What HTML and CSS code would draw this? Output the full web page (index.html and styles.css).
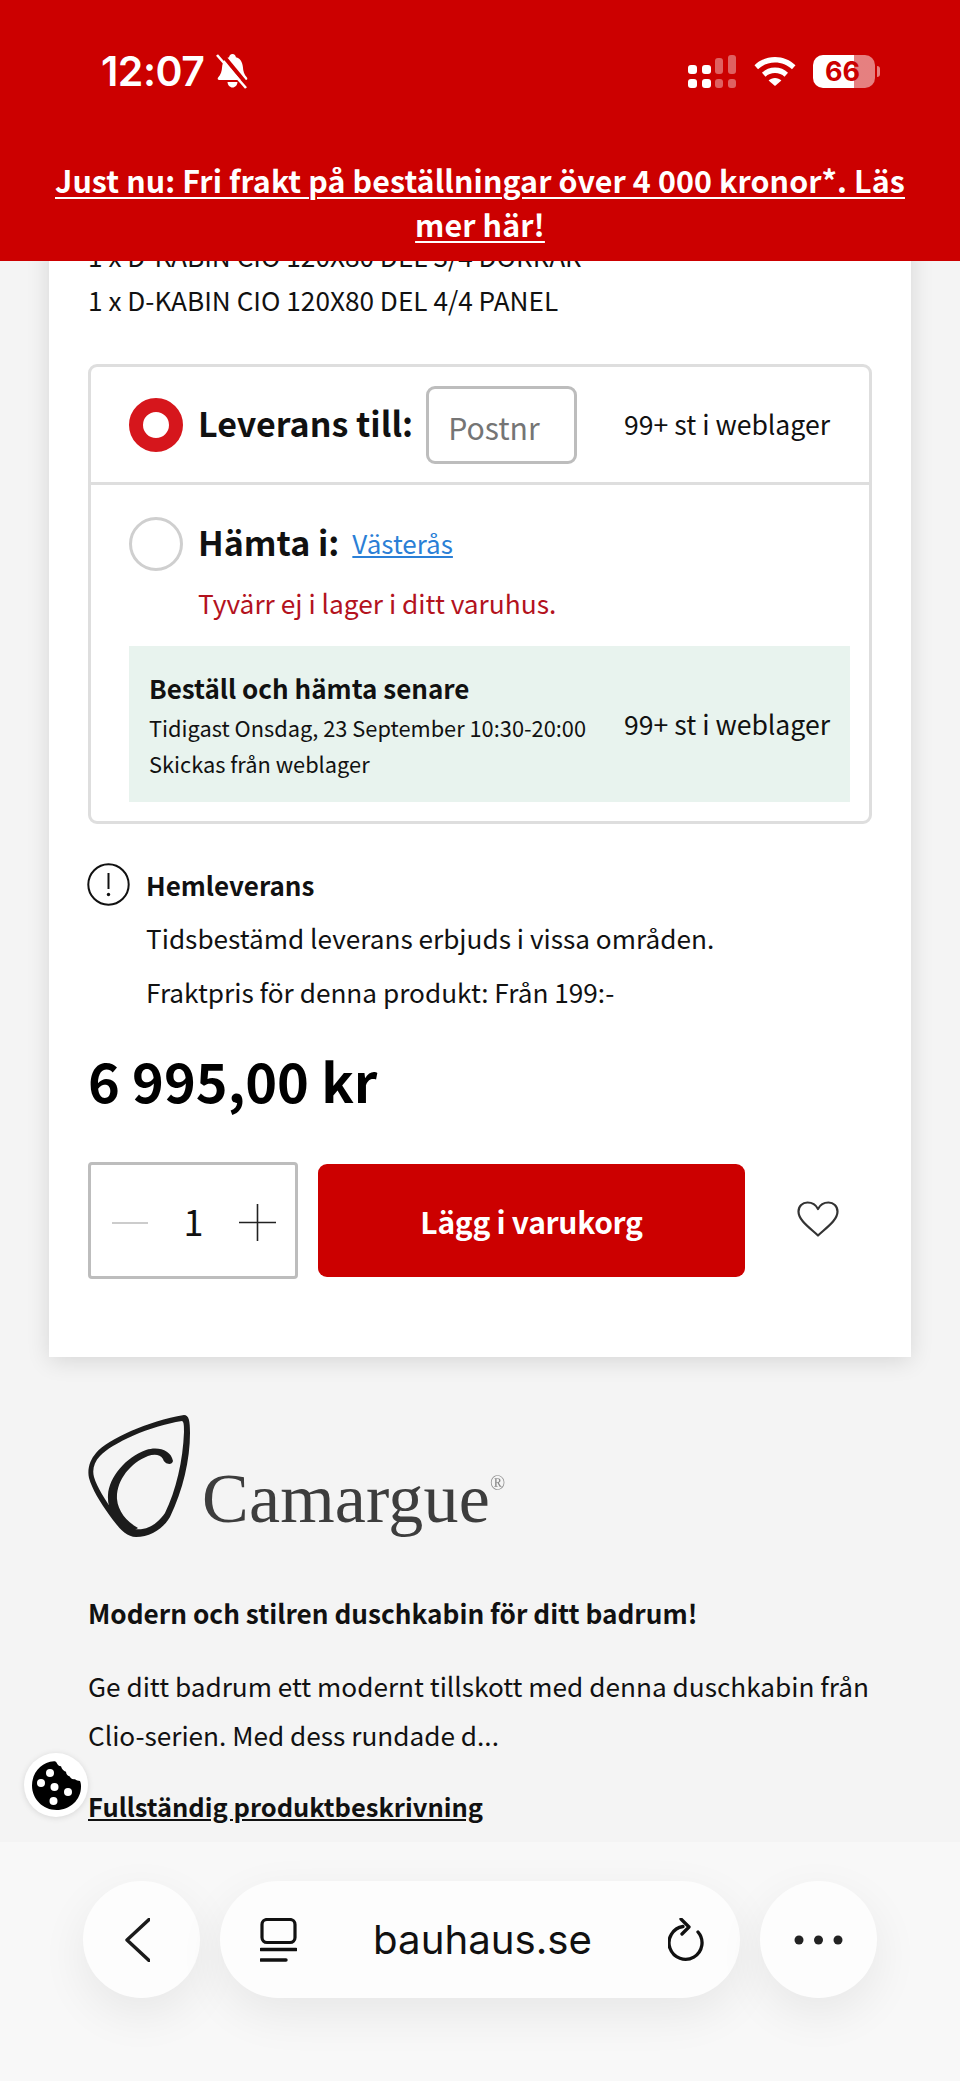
FILE: index.html
```html
<!DOCTYPE html>
<html lang="sv">
<head>
<meta charset="utf-8">
<title>Bauhaus</title>
<link rel="stylesheet" href="styles.css">
</head>
<body>
<div class="page">
  <header class="top">
    <div class="status">
      <div class="status-left">
        <span class="time">12:07</span>
        <svg class="bell" viewBox="0 0 34 36" width="34" height="36"><path d="M16.500 1c2 0 3.200 1.400 3.400 3.200 4.500 1.200 6.600 5 7 9.800.3 4 1.200 7.500 4 10.500.9 1 .3 2.500-1.100 2.500H3.200c-1.400 0-2-1.500-1.100-2.500 2.800-3 3.700-6.500 4-10.500.4-4.800 2.500-8.600 7-9.800C13.300 2.400 14.500 1 16.500 1z" fill="#fff"/><path d="M11.500 29h10c-.3 3.200-2.300 5.500-5 5.500s-4.700-2.300-5-5.500z" fill="#fff"/><path d="M5 0l28 34" stroke="#cc0000" stroke-width="4"/><path d="M1 2l29 33" stroke="#fff" stroke-width="2.600"/></svg>
      </div>
      <div class="status-right">
        <svg class="signal" viewBox="0 0 48 33" width="48" height="33"><g fill="#fff"><rect x="0" y="10" width="9" height="9" rx="3"/><rect x="14" y="10" width="9" height="9" rx="3"/><rect x="0" y="24" width="9" height="9" rx="3"/><rect x="14" y="24" width="9" height="9" rx="3"/></g><g fill="#fff" opacity=".38"><rect x="27" y="3" width="8" height="16" rx="3"/><rect x="40" y="0" width="8" height="19" rx="3"/><rect x="27" y="24" width="8" height="9" rx="3"/><rect x="40" y="24" width="8" height="9" rx="3"/></g></svg>
        <svg class="wifi" viewBox="0 0 42 29" width="42" height="29"><path d="M21 0c8 0 15 3 20.500 8.300l-3.500 4C33.500 8 27.500 5.500 21 5.500S8.500 8 4 12.300l-3.500-4C6 3 13 0 21 0z" fill="#fff"/><path d="M21 10.500c5 0 9.500 1.900 13 5.200l-3.500 4C28 17.300 24.700 16 21 16s-7 1.300-9.500 3.700l-3.500-4c3.500-3.300 8-5.200 13-5.200z" fill="#fff"/><path d="M21 21c2.500 0 4.700.9 6.400 2.400L21 29l-6.400-5.600C16.300 21.900 18.500 21 21 21z" fill="#fff"/></svg>
        <div class="battery"><span class="battery-num">66</span></div>
        <span class="battery-tip"></span>
      </div>
    </div>
    <a class="promo">Just nu: Fri frakt på beställningar över 4 000 kronor*. Läs mer här!</a>
  </header>

  <main class="main">
    <section class="card">
      <p class="parts">1 x D-KABIN CIO 120X80 DEL 3/4 DÖRRAR<br>1 x D-KABIN CIO 120X80 DEL 4/4 PANEL</p>

      <div class="options">
        <div class="opt-top">
          <span class="radio radio-on"></span>
          <span class="opt-title">Leverans till:</span>
          <span class="postnr">Postnr</span>
          <span class="stock">99+ st i weblager</span>
        </div>
        <div class="opt-bottom">
          <div class="pickup-row">
            <span class="radio"></span>
            <span class="opt-title">Hämta i:</span>
            <a class="store">Västerås</a>
          </div>
          <p class="nostock">Tyvärr ej i lager i ditt varuhus.</p>
          <div class="later">
            <div class="later-text">
              <p class="later-title">Beställ och hämta senare</p>
              <p class="later-line">Tidigast Onsdag, 23 September 10:30-20:00</p>
              <p class="later-line">Skickas från weblager</p>
            </div>
            <span class="stock stock-later">99+ st i weblager</span>
          </div>
        </div>
      </div>

      <div class="home">
        <div class="home-head">
          <svg class="info" viewBox="0 0 43 43" width="43" height="43"><circle cx="21.500" cy="21.500" r="20.200" fill="none" stroke="#111" stroke-width="2"/><path d="M21.500 10v16" stroke="#111" stroke-width="2"/><circle cx="21.500" cy="31.500" r="1.700" fill="#111"/></svg>
          <span class="home-title">Hemleverans</span>
        </div>
        <p class="home-line">Tidsbestämd leverans erbjuds i vissa områden.</p>
        <p class="home-line">Fraktpris för denna produkt: Från 199:-</p>
      </div>

      <p class="price">6 995,00 kr</p>

      <div class="buy">
        <div class="qty">
          <span class="minus"></span>
          <span class="qty-num">1</span>
          <svg class="plus" viewBox="0 0 37 37" width="37" height="37"><path d="M0 18.500h37M18.500 0v37" stroke="#222" stroke-width="1.600"/></svg>
        </div>
        <button class="add">Lägg i varukorg</button>
        <svg class="heart" viewBox="0 0 42 36" width="42" height="36"><path d="M21 34.500C13 27 1.500 19.500 1.500 10.500 1.500 5 5.500 1.500 10.500 1.500c4.500 0 8.500 2.500 10.500 6.500 2-4 6-6.500 10.500-6.500 5 0 9 3.500 9 9 0 9-11.500 16.500-19.500 24z" fill="none" stroke="#333" stroke-width="2.200" stroke-linejoin="round"/></svg>
      </div>
    </section>

    <section class="desc">
      <div class="logo">
        <svg class="logo-mark" viewBox="0 0 102 122" width="102" height="122"><path fill-rule="evenodd" fill="#1c1c1c" d="M96 0C101 0 102 6 102 18C102 45 95 75 82 102C75 114 62 122 48 122C38 122 30 112 22 101C12 87 4 74 1 63C-1 54 2 45 8 38C20 24 60 6 96 0ZM94 6C62 11 24 28 12 41C6 47 4 55 6 62C9 72 17 85 26 97C32 105 38 112 46 114C60 116 70 108 77 98C88 76 95 45 96 17C96 11 96 7 94 6Z"/><path fill="#1c1c1c" d="M85 46C83 35 70 31 58 35C38 42 21 62 20 80C19 96 28 110 44 117L50 113C38 106 30 96 29 84C28 66 42 48 60 41C66 39 72 39 75 44C76 49 84 51 85 46Z"/></svg>
        <span class="logo-text">Camargue<sup class="logo-reg">®</sup></span>
      </div>
      <h2 class="desc-title">Modern och stilren duschkabin för ditt badrum!</h2>
      <p class="desc-body">Ge ditt badrum ett modernt tillskott med denna duschkabin från Clio-serien. Med dess rundade d...</p>
      <a class="desc-link">Fullständig produktbeskrivning</a>
    </section>
  </main>

  <button class="cookie" aria-label="Cookies">
    <svg viewBox="0 0 49 49" width="49" height="49"><path fill="#000" d="M22 .2c1 0 2 .4 2.500 1.300 1 2.500 2.300 3.500 4.500 3.700.8 3 2.500 4.800 5 5.500.2 2.500 1.500 4 3.500 4.500 1.300 2.500 3.300 3.500 5.500 3 1.500 1 3 1.700 5 1.800.9 2 1 4 1 5.500C49 39 38 49 24.500 49S0 38 0 24.500C0 11.500 9.500.8 22 .2z"/><g fill="#fff"><circle cx="18" cy="12" r="4"/><circle cx="9" cy="22" r="4"/><circle cx="22.500" cy="26" r="4"/><circle cx="36" cy="31" r="4"/><circle cx="21.500" cy="40" r="4"/></g></svg>
  </button>

  <nav class="bar">
    <div class="pill pill-round">
      <svg class="back" viewBox="0 0 25 44" width="25" height="44"><path d="M24 1.500L2 22l22 20.500" fill="none" stroke="#1b1b1b" stroke-width="3.400" stroke-linecap="round" stroke-linejoin="round"/></svg>
    </div>
    <div class="pill pill-url">
      <svg class="tabs" viewBox="0 0 37 44" width="37" height="44"><rect x="2" y="1.500" width="33" height="23" rx="5" fill="none" stroke="#111" stroke-width="3.200"/><path d="M1 31.500h35" stroke="#111" stroke-width="3.400" stroke-linecap="round"/><path d="M1 42h25" stroke="#111" stroke-width="3.400" stroke-linecap="round"/></svg>
      <span class="url">bauhaus.se</span>
      <svg class="reload" viewBox="0 0 37 44" width="37" height="44"><path d="M15 8.500A16.500 16.500 0 1 0 30 14" fill="none" stroke="#111" stroke-width="3.300" stroke-linecap="round"/><path d="M13 1l8 8-7 7" fill="none" stroke="#111" stroke-width="3.300" stroke-linecap="round" stroke-linejoin="round"/></svg>
    </div>
    <div class="pill pill-round">
      <svg viewBox="0 0 49 10" width="49" height="10"><circle cx="5" cy="5" r="4.500" fill="#222"/><circle cx="24.500" cy="5" r="4.500" fill="#222"/><circle cx="44" cy="5" r="4.500" fill="#222"/></svg>
    </div>
  </nav>
</div>
</body>
</html>
```

FILE: styles.css
```css
* { box-sizing: border-box; }
html, body { margin: 0; padding: 0; }
body {
  font-family: "Noto Sans CJK SC", "Noto Sans", sans-serif;
  color: #111;
  background: #f4f4f4;
}
p, h2 { margin: 0; font-weight: 400; }
.page {
  position: relative;
  width: 960px;
  height: 2081px;
  overflow: hidden;
  background: #f4f4f4;
}

/* top overlay */
.top {
  position: absolute;
  top: 0; left: 0; right: 0;
  height: 261px;
  background: #cc0000;
  z-index: 3;
  color: #fff;
  text-align: center;
}
.status {
  display: flex;
  justify-content: space-between;
  align-items: center;
  height: 36px;
  margin-top: 53px;
  padding: 0 80px 0 101px;
}
.status-left { display: flex; align-items: center; gap: 12px; }
.time {
  font-family: Inter, "Liberation Sans", sans-serif;
  font-size: 41px;
  font-weight: 600;
  line-height: 36px;
  letter-spacing: -.5px;
}
.status-right { display: flex; align-items: center; }
.wifi { margin-left: 18px; }
.battery {
  width: 62px;
  height: 33px;
  margin-left: 17px;
  border-radius: 10px;
  background: linear-gradient(to right, #fff 0 66%, rgba(255,255,255,.5) 66% 100%);
  text-align: center;
}
.battery-num {
  font-family: Inter, "Liberation Sans", sans-serif;
  font-size: 27px;
  font-weight: 700;
  line-height: 33px;
  color: #cc0000;
  display: block;
  padding-right: 3px;
}
.battery-tip {
  width: 3px;
  height: 11px;
  margin-left: 2px;
  border-radius: 0 3px 3px 0;
  background: rgba(255,255,255,.5);
}
.promo {
  display: block;
  margin: 69px auto 0;
  width: 870px;
  font-size: 30.400px;
  font-weight: 700;
  line-height: 44px;
  letter-spacing: .1px;
  color: #fff;
  text-decoration: underline;
  text-decoration-thickness: 2px;
  text-underline-offset: 4px;
}

/* product card */
.main { padding-top: 234px; }
.card {
  width: 862px;
  height: 1123px;
  margin-left: 49px;
  padding: 0 39px;
  background: #fff;
  box-shadow: 0 4px 22px rgba(0,0,0,.12);
}
.parts { font-size: 26.200px; line-height: 44px; }
.options {
  width: 784px;
  height: 460px;
  margin-top: 42px;
  border: 3px solid #dedede;
  border-radius: 9px;
}
.opt-top {
  display: flex;
  align-items: center;
  height: 118px;
  padding-left: 38px;
  border-bottom: 3px solid #dedede;
}
.radio {
  flex: none;
  width: 54px;
  height: 54px;
  border-radius: 50%;
  border: 3px solid #cfcfcf;
  background: #fff;
}
.radio-on { border: 14px solid #d6161c; }
.opt-title {
  margin-left: 15px;
  padding-bottom: 4px;
  font-size: 34px;
  font-weight: 700;
  line-height: 50px;
}
.postnr {
  display: block;
  width: 151px;
  height: 78px;
  margin-left: 13px;
  padding-left: 19px;
  border: 3px solid #bdbdbd;
  border-radius: 9px;
  color: #757575;
  font-size: 30.200px;
  line-height: 76px;
}
.stock {
  margin-left: auto;
  font-size: 26.600px;
  line-height: 40px;
}
.opt-top .stock { margin-right: 39px; margin-top: -2px; }
.opt-bottom { padding: 32px 19px 0 38px; }
.pickup-row { display: flex; align-items: center; height: 54px; }
.store {
  margin-left: 13px;
  margin-top: -2px;
  color: #2b7fd6;
  font-size: 26px;
  line-height: 40px;
  text-decoration: underline;
}
.nostock {
  margin: 12px 0 0 69px;
  color: #b3121d;
  font-size: 26.300px;
  line-height: 40px;
}
.later {
  display: flex;
  align-items: center;
  height: 156px;
  margin-top: 23px;
  padding: 0 20px;
  background: #e8f3ee;
}
.later-text { margin-top: -2px; }
.later-title { font-size: 26px; font-weight: 700; line-height: 45px; }
.later-line { font-size: 21.800px; line-height: 36px; }
.stock-later { margin-top: -1px; }
.home { margin-top: 38px; }
.home-head { display: flex; align-items: center; height: 44px; }
.info { flex: none; margin-left: -1px; }
.home-title {
  margin-left: 16px;
  padding-top: 2px;
  font-size: 26px;
  font-weight: 700;
  line-height: 44px;
}
.home-line {
  margin: 10px 0 0 58px;
  font-size: 26.200px;
  line-height: 44px;
}
.price {
  margin-top: 26px;
  color: #000;
  font-size: 54px;
  font-weight: 700;
  line-height: 80px;
}
.buy { display: flex; align-items: center; margin-top: 42px; }
.qty {
  display: flex;
  align-items: center;
  justify-content: space-between;
  width: 210px;
  height: 117px;
  padding: 4px 19px 0 21px;
  border: 3px solid #bdbdbd;
  border-radius: 4px;
}
.minus { width: 36px; height: 2px; background: #ccc; }
.qty-num { font-size: 36px; line-height: 50px; margin-top: -6px; }
.add {
  width: 427px;
  height: 113px;
  margin-left: 20px;
  border: 0;
  border-radius: 9px;
  background: #cc0000;
  color: #fff;
  font-family: inherit;
  font-size: 30px;
  font-weight: 700;
  line-height: 44px;
  letter-spacing: -.3px;
}
.heart { margin: -4px 0 0 52px; }

/* description */
.desc { padding: 58px 80px 0 88px; }
.logo { display: flex; align-items: flex-end; height: 122px; filter: blur(.5px); }
.logo-text {
  margin: 0 0 -2px 12px;
  font-family: "Liberation Serif", serif;
  font-size: 70px;
  line-height: 80px;
  color: #3d3d3d;
  letter-spacing: .2px;
}
.logo-reg {
  font-size: 20px;
  line-height: 0;
  vertical-align: 32px;
  color: #888;
}
.desc-title {
  margin-top: 54px;
  font-size: 26.200px;
  font-weight: 700;
  line-height: 44px;
}
.desc-body {
  margin-top: 27px;
  font-size: 26.200px;
  line-height: 49px;
}
.desc-link {
  display: block;
  margin-top: 24px;
  font-size: 25.500px;
  font-weight: 700;
  line-height: 44px;
  text-decoration: underline;
}

/* cookie button */
.cookie {
  position: absolute;
  left: 24px;
  top: 1753px;
  z-index: 2;
  display: flex;
  align-items: center;
  justify-content: center;
  width: 64px;
  height: 64px;
  padding: 0;
  border: 0;
  border-radius: 50%;
  background: #fff;
  box-shadow: 0 1px 6px rgba(0,0,0,.12);
}

/* browser bar */
.bar {
  position: absolute;
  left: 0; right: 0; bottom: 0;
  height: 239px;
  z-index: 2;
  display: flex;
  justify-content: center;
  gap: 20px;
  padding-top: 39px;
  background: #f8f8f8;
}
.pill {
  display: flex;
  align-items: center;
  justify-content: center;
  height: 117px;
  border-radius: 59px;
  background: #fdfdfd;
  box-shadow: 0 16px 48px rgba(0,0,0,.07);
}
.pill-round { width: 117px; }
.back { margin-right: 8px; }
.pill-url {
  width: 520px;
  justify-content: space-between;
  padding: 0 35px 0 40px;
}
.url {
  font-family: Inter, "Liberation Sans", sans-serif;
  font-size: 40.200px;
  font-weight: 400;
  line-height: 50px;
  color: #111;
}
```
